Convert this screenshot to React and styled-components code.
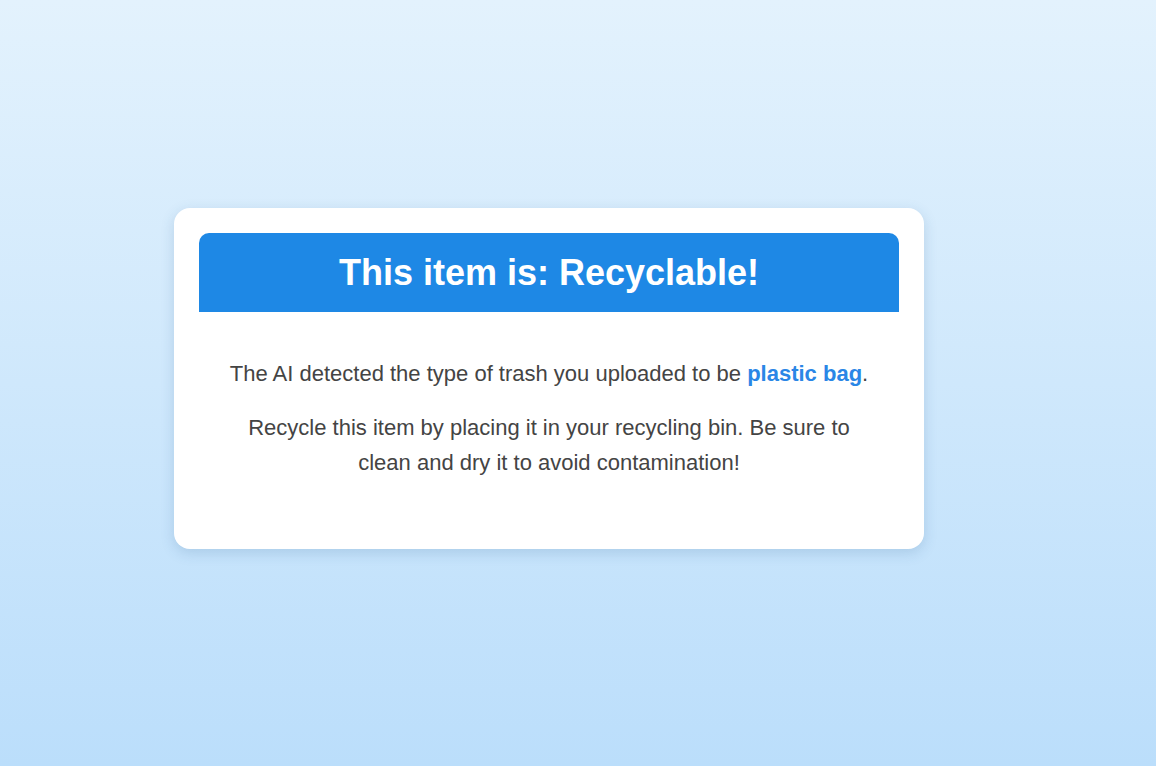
import React from 'react'
import styled, { createGlobalStyle } from 'styled-components'

const GlobalStyle = createGlobalStyle`
    html, body {
        margin:0;
        padding:0;
    }
    body {
        font-family:"Liberation Sans", Arial, sans-serif;
        background:linear-gradient(to bottom, #e3f2fd, #bbdefb);
        min-height:100vh;
    }
`

function App() {
  return (
    <Page>
        <GlobalStyle />
        <Card>
            <Header>
                <Title>This item is: Recyclable!</Title>
            </Header>
            <Body>
                <Text>
                    The AI detected the type of trash you uploaded to be <Highlight>plastic bag</Highlight>.
                </Text>
                <Text>
                    Recycle this item by placing it in your recycling bin. Be sure to clean and dry it to avoid contamination!
                </Text>
            </Body>
        </Card>
    </Page>
  )
}

export default App

const Page = styled.div`
    min-height:100vh;
    box-sizing:border-box;
    padding:208px 0 0 174px;
`

const Card = styled.div`
    width:750px;
    box-sizing:border-box;
    background:#ffffff;
    border-radius:16px;
    padding:25px;
    box-shadow:0 4px 14px rgba(40, 90, 140, 0.18);
`

const Header = styled.div`
    background-color:#1e88e5;
    border-radius:10px 10px 0 0;
    padding:20px;
    text-align:center;
`

const Title = styled.h1`
    margin:0;
    color:#ffffff;
    font-size:36px;
    line-height:39px;
    font-weight:bold;
`

const Body = styled.div`
    padding:25px 25px 24px;
    text-align:center;
`

const Text = styled.p`
    margin:19px 0;
    font-size:22px;
    line-height:1.6;
    color:#444444;
`

const Highlight = styled.span`
    color:#2a86e6;
    font-weight:bold;
`
